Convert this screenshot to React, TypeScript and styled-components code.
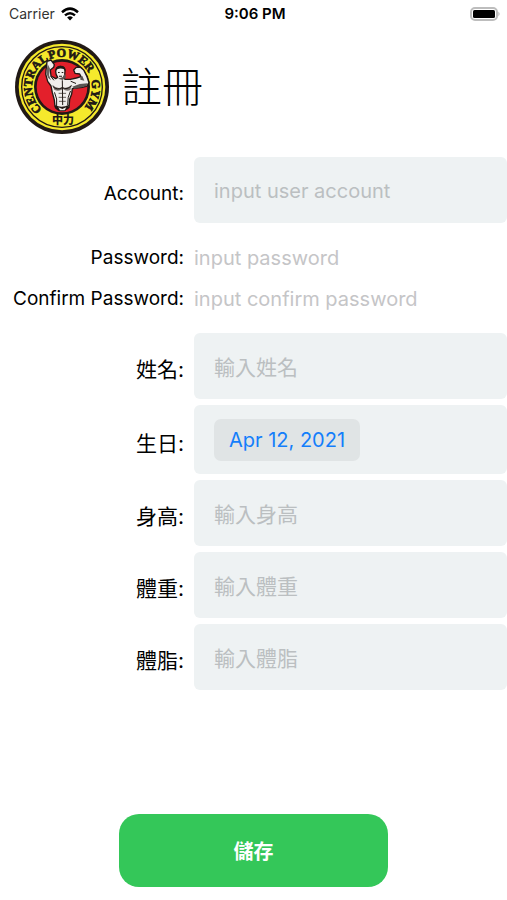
import React from "react";
import styled, { createGlobalStyle } from "styled-components";

const GlobalStyle = createGlobalStyle`
  *, *::before, *::after { box-sizing: border-box; }
  html, body, #root { height: 100%; }
  body {
    margin: 0;
    background: #fff;
    color: #000;
    font-family: Inter, "Noto Sans CJK TC", sans-serif;
  }
  button, input { font: inherit; }
`;

const Screen = styled.div`
  display: flex;
  flex-direction: column;
  min-height: 100%;
  background: #fff;
`;

const StatusBar = styled.div`
  display: grid;
  grid-template-columns: 1fr auto 1fr;
  align-items: center;
  height: 28px;
  padding: 0 6px 0 9px;
  font-size: 14px;
  line-height: 20px;
`;

const Carrier = styled.div`
  display: flex;
  align-items: center;
  gap: 6px;
  color: #333;
`;

const Clock = styled.time`
  font-size: 15px;
  font-weight: 600;
`;

const BatteryIcon = styled.svg`
  justify-self: end;
`;

const Header = styled.header`
  display: flex;
  align-items: center;
  gap: 12px;
  padding: 12px 15px 0;
`;

const Title = styled.h1`
  margin: 0;
  font-size: 41px;
  line-height: 60px;
  font-weight: 300;
`;

const Form = styled.form`
  display: flex;
  flex: 1;
  flex-direction: column;
  margin-top: 23px;
`;

const Fields = styled.div`
  display: flex;
  flex-direction: column;
  gap: 6px;
`;

const Row = styled.div`
  display: grid;
  grid-template-columns: 184px minmax(0, 1fr);
  column-gap: 10px;
  align-items: center;
`;

const PlainRows = styled.div`
  display: flex;
  flex-direction: column;
  gap: 13px;
  padding: 15px 0 14px;
`;

const Label = styled.label<{ $plain?: boolean; $cjk?: boolean }>`
  padding-top: ${(p) => (p.$plain ? 0 : 8)}px;
  text-align: right;
  white-space: nowrap;
  font-size: ${(p) => (p.$cjk ? 21 : 19)}px;
  line-height: 28px;
`;

const Input = styled.input<{ $plain?: boolean; $cjk?: boolean }>`
  width: 100%;
  height: ${(p) => (p.$plain ? 28 : 66)}px;
  padding: ${(p) => (p.$plain ? "0" : "2px 20px 0")};
  border: 0;
  border-radius: 6px;
  background: ${(p) => (p.$plain ? "transparent" : "#eef2f3")};
  color: #000;
  font-size: ${(p) => (p.$cjk ? 21 : 20)}px;
  &::placeholder {
    color: ${(p) => (p.$plain ? "#c5c5c7" : "#bbbfc1")};
    opacity: 1;
  }
`;

const DateBox = styled.div`
  display: flex;
  align-items: center;
  height: 69px;
  padding: 0 20px;
  border-radius: 6px;
  background: #eef2f3;
`;

const DateButton = styled.button`
  height: 42px;
  padding: 0 15px;
  border: 0;
  border-radius: 7px;
  background: #e0e4e5;
  color: #147efb;
  font-size: 20px;
`;

const SaveButton = styled.button`
  width: 53%;
  height: 73px;
  margin: auto auto 13px;
  border: 0;
  border-radius: 20px;
  background: #34c759;
  color: #fff;
  font-size: 20px;
  font-weight: 700;
`;

const Wifi = () => (
  <svg width="18" height="14" viewBox="0 0 18 14" aria-label="Wi-Fi" fill="none" stroke="#000" strokeWidth="2.5">
    <path d="M1 5.2Q9-2 17 5.2" />
    <path d="M4 8.4Q9 4 14 8.4" />
    <path d="M9 13.4L6.1 10.5Q9 8.2 11.9 10.5Z" fill="#000" stroke="none" />
  </svg>
);

const Battery = () => (
  <BatteryIcon width="31" height="15" viewBox="0 0 31 15" aria-label="Battery">
    <rect x="1" y="1" width="26" height="12" rx="4" fill="#fff" stroke="#bdbdbd" strokeWidth="2" />
    <rect x="3" y="3" width="22" height="8" rx="1.5" fill="#000" />
    <path d="M28.4 4.6q2.4 2.4 0 4.8z" fill="#b5b5b5" />
  </BatteryIcon>
);

const Logo = () => (
  <svg width="94" height="94" viewBox="0 0 282 282" role="img" aria-label="Central Power Gym">
    <defs>
      <path id="ring" d="M80 207A90 90 0 1 1 202 207" />
    </defs>
    <circle cx="141" cy="141" r="141" fill="#211915" />
    <circle cx="141" cy="141" r="130" fill="#f5e92c" />
    <circle cx="141" cy="141" r="121" fill="none" stroke="#211915" strokeWidth="4" />
    <circle cx="141" cy="141" r="84" fill="#211915" />
    <circle cx="141" cy="141" r="76" fill="#e3202b" />
    <g
      fontFamily="Liberation Serif, serif"
      fontWeight="700"
      fontSize="36"
      fill="#211915"
      stroke="#211915"
      strokeWidth="2"
      textAnchor="middle"
    >
      <text><textPath href="#ring" startOffset="20%">CENTRAL</textPath></text>
      <text><textPath href="#ring" startOffset="57%">POWER</textPath></text>
      <text><textPath href="#ring" startOffset="88%">GYM</textPath></text>
    </g>
    <text x="144" y="251" textAnchor="middle" fontFamily="Noto Sans CJK TC, sans-serif" fontWeight="900" fontSize="33" fill="#211915">
      中力
    </text>
    <path
      d="M96 64L108 60L118 74L116 82L106 90L108 108L122 116L128 112Q122 106 122 94Q123 80 136 79Q150 80 150 94Q150 106 146 112L150 118L166 118L184 114L198 110L194 102L180 100L176 90L184 82L196 82L206 90L216 110L222 128L216 138L202 142L184 144L172 146L170 162L164 178L162 202L150 210L130 210L120 200L118 180L112 158L108 138L98 124L92 102Z"
      fill="#f1eeec"
      stroke="#211915"
      strokeWidth="4"
      strokeLinejoin="round"
    />
    <path d="M121 94q0-17 16-17t15 17l-5-6q-10-5-20 0z" fill="#211915" />
    <path d="M129 96h5v3h-5zM140 96h5v3h-5zM132 107h9v3h-9z" fill="#211915" />
    <path d="M150 100l3 12-10 8-14-4 6-2 9-3z" fill="#5b5552" />
    <path d="M98 72l7 14-3 20 6 15-9-8-5-14z" fill="#6a6461" />
    <path d="M112 134q15 15 30 7 14 6 28-7l-4 16q-12 6-22-3-14 9-26 2z" fill="#77716e" />
    <path d="M172 140l22-8 24-2-4 8-14 4-22 4zM196 110l6-2 6 14-12-3z" fill="#5b5552" />
    <g fill="none" stroke="#211915" strokeWidth="3" strokeLinecap="round">
      <path d="M142 122l1 72M114 140q12 12 28 3 14 8 27-5" />
      <path d="M119 158q9 18 6 40M166 154q-9 16-8 40" />
      <path d="M132 160l20 0M132 172l20 0M133 184l18 0" strokeWidth="2" />
      <path d="M108 110l8 10M168 124l14 6" />
    </g>
    <path d="M120 196q22 9 42-2l-2 12-12 8h-16l-12-9z" fill="#211915" />
    <path d="M130 202l12 5 12-5-5 9h-14z" fill="#f1eeec" />
  </svg>
);

type FieldProps = {
  id: string;
  label: string;
  hint: string;
  type?: string;
  plain?: boolean;
  cjk?: boolean;
};

const Field = ({ id, label, hint, type = "text", plain, cjk }: FieldProps) => (
  <Row>
    <Label htmlFor={id} $plain={plain} $cjk={cjk}>{label}</Label>
    <Input id={id} type={type} placeholder={hint} $plain={plain} $cjk={cjk} />
  </Row>
);

export default function App() {
  return (
    <>
      <GlobalStyle />
      <Screen>
        <StatusBar>
          <Carrier>Carrier <Wifi /></Carrier>
          <Clock>9:06 PM</Clock>
          <Battery />
        </StatusBar>
        <Header>
          <Logo />
          <Title>註冊</Title>
        </Header>
        <Form onSubmit={(e) => e.preventDefault()}>
          <Fields>
            <Field id="account" label="Account:" hint="input user account" />
            <PlainRows>
              <Field id="password" label="Password:" hint="input password" type="password" plain />
              <Field id="confirm" label="Confirm Password:" hint="input confirm password" type="password" plain />
            </PlainRows>
            <Field id="name" label="姓名:" hint="輸入姓名" cjk />
            <Row>
              <Label htmlFor="birthday" $cjk>生日:</Label>
              <DateBox>
                <DateButton id="birthday" type="button">Apr 12, 2021</DateButton>
              </DateBox>
            </Row>
            <Field id="height" label="身高:" hint="輸入身高" cjk />
            <Field id="weight" label="體重:" hint="輸入體重" cjk />
            <Field id="fat" label="體脂:" hint="輸入體脂" cjk />
          </Fields>
          <SaveButton type="submit">儲存</SaveButton>
        </Form>
      </Screen>
    </>
  );
}
